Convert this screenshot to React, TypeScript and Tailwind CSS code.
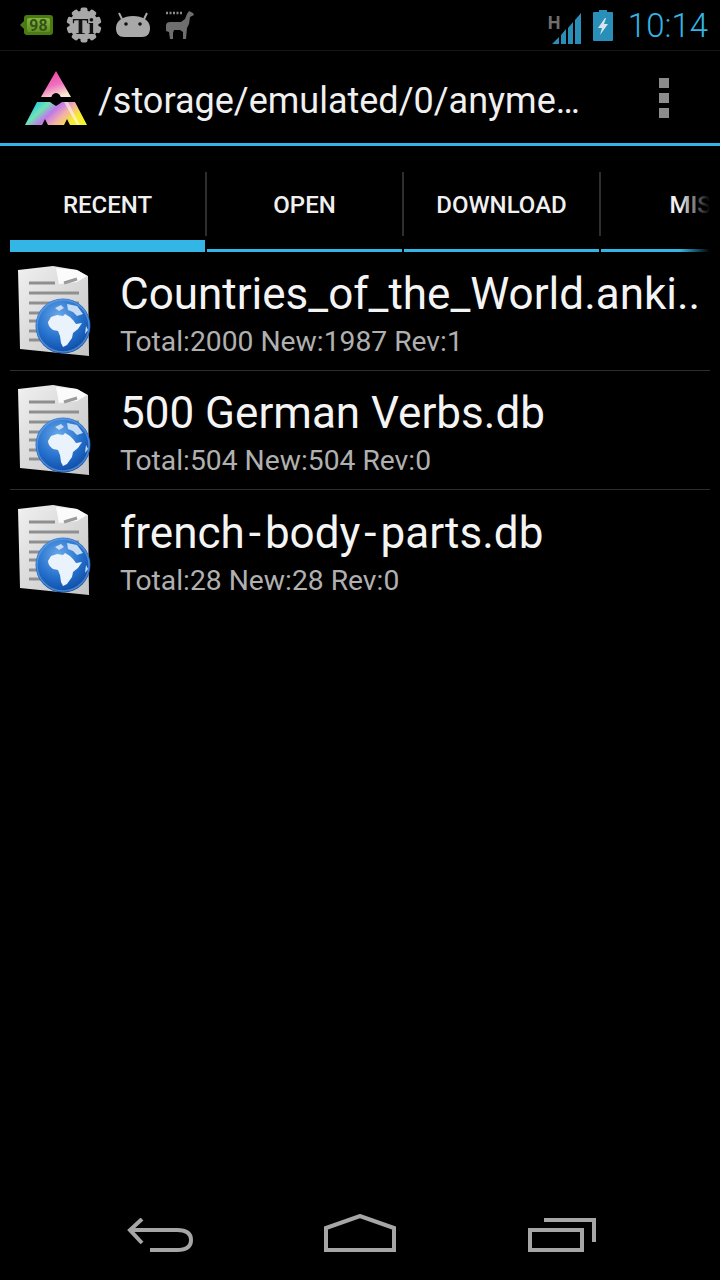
const rows = [
  { name: 'Countries_of_the_World.anki..', stats: 'Total:2000 New:1987 Rev:1' },
  { name: '500 German Verbs.db', stats: 'Total:504 New:504 Rev:0' },
  { name: 'french-body-parts.db', stats: 'Total:28 New:28 Rev:0' },
]

const tabs = ['RECENT', 'OPEN', 'DOWNLOAD', 'MISC']

function BatteryGreen() {
  return (
    <svg width="36" height="26" viewBox="0 0 36 26" className="blur-[0.4px]">
      <defs>
        <linearGradient id="batt" x1="0" y1="0" x2="0" y2="1">
          <stop offset="0" stopColor="#86b53e" />
          <stop offset="1" stopColor="#5f8f22" />
        </linearGradient>
      </defs>
      <path d="M1 13l4-4V6q0-3 3-3h23q3 0 3 3v14q0 3-3 3H8q-3 0-3-3v-3z" fill="#4a7a12" />
      <rect x="8" y="6" width="23" height="14" rx="2" fill="url(#batt)" />
      <text x="19.5" y="19" textAnchor="middle" fontSize="16" fontWeight="700" fill="#33501a" fontFamily="Roboto, sans-serif">98</text>
    </svg>
  )
}

function GearTi() {
  const teeth = Array.from({ length: 10 }, (_, i) => i * 36)
  return (
    <svg width="36" height="36" viewBox="0 0 36 36" className="blur-[0.3px]">
      {teeth.map(a => (
        <rect key={a} x="14.5" y="0.5" width="7" height="8" rx="2" fill="#a8a8a8" transform={`rotate(${a} 18 18)`} />
      ))}
      <circle cx="18" cy="18" r="14.5" fill="#a8a8a8" />
      <text x="17.5" y="27" textAnchor="middle" fontSize="24" fontWeight="700" fill="#111" fontFamily="Liberation Serif, serif">Ti</text>
    </svg>
  )
}

function AndroidHead() {
  return (
    <svg width="36" height="26" viewBox="0 0 36 26" className="blur-[0.3px]">
      <path d="M7 7L4 1M29 7l3-6" stroke="#a8a8a8" strokeWidth="2" />
      <path d="M1 16C1 8 9 4 18 4s17 4 17 12c0 6-3 9-8 9H9c-5 0-8-3-8-9z" fill="#a8a8a8" />
      <circle cx="11" cy="12" r="1.8" fill="#111" />
      <circle cx="25" cy="12" r="1.8" fill="#111" />
    </svg>
  )
}

function Llama() {
  return (
    <svg width="30" height="30" viewBox="0 0 30 30" className="blur-[0.3px]">
      <path d="M1 3h2M4.500 3h2M8 3h2M11.500 3h2M15 3h2" stroke="#8a8a8a" strokeWidth="2.500" />
      <path d="M24 1l4 2 1 2-4 2-1 7-2 4-1 11h-3v-7l-3-2-6 0-1 3 0 6H5l-1-7-3-1V15c0-2 2-3 4-3h11l4-3 2-5z" fill="#6e6e6e" />
    </svg>
  )
}

function Signal() {
  return (
    <svg width="30" height="32" viewBox="0 0 30 32">
      <path d="M0 31L7 24V31zM9 22L14 16V31H9zM16 15L21 9V31H16zM23 7L29 0V31H23z" fill="#2a8fb8" />
    </svg>
  )
}

function BatteryCharging() {
  return (
    <svg width="20" height="31" viewBox="0 0 20 31">
      <path d="M6 0h8v2h5a1 1 0 0 1 1 1v27a1 1 0 0 1-1 1H1a1 1 0 0 1-1-1V3a1 1 0 0 1 1-1h5z" fill="#2a8fb8" />
      <path d="M12 8L5 18h4l-2 7 8-11h-4l2-6z" fill="#d6e6ec" />
    </svg>
  )
}

function Logo() {
  return (
    <svg width="63" height="56" viewBox="0 0 63 56" className="blur-[0.5px]">
      <defs>
        <linearGradient id="logoTop" x1="0.2" y1="0" x2="0.6" y2="1">
          <stop offset="0" stopColor="#f0409c" />
          <stop offset="0.55" stopColor="#f070c0" />
          <stop offset="1" stopColor="#f8ecd0" />
        </linearGradient>
        <linearGradient id="logoBottom" x1="0" y1="0.3" x2="1" y2="0.7">
          <stop offset="0" stopColor="#12c4f4" />
          <stop offset="0.24" stopColor="#70e4b4" />
          <stop offset="0.42" stopColor="#c078ea" />
          <stop offset="0.62" stopColor="#f4b0a8" />
          <stop offset="0.84" stopColor="#f7ec30" />
          <stop offset="1" stopColor="#f2f230" />
        </linearGradient>
      </defs>
      <path d="M31 0L46 26H16z" fill="url(#logoTop)" />
      <path d="M12 31H25L31 35L37 31H50L62 54H0z" fill="url(#logoBottom)" />
      <path d="M39 31L52 54H55L43 31z" fill="#fff" opacity="0.55" />
      <path d="M17 54l3-6 3 6zM39 54l3-6 3 6z" fill="#000" />
      <ellipse cx="31" cy="28" rx="5" ry="6" fill="#000" />
    </svg>
  )
}

function Overflow() {
  return (
    <div className="flex flex-col gap-[5px]">
      <div className="w-[10px] h-[10px] bg-[#8c8c8c]" />
      <div className="w-[10px] h-[10px] bg-[#8c8c8c]" />
      <div className="w-[10px] h-[10px] bg-[#8c8c8c]" />
    </div>
  )
}

function DocGlobe({ id }: { id: number }) {
  return (
    <svg width="76" height="94" viewBox="0 0 76 94" className="shrink-0 blur-[0.6px]">
      <defs>
        <radialGradient id={`globe${id}`} cx="0.42" cy="0.32" r="0.75">
          <stop offset="0" stopColor="#6aa8ea" />
          <stop offset="0.55" stopColor="#2470cc" />
          <stop offset="1" stopColor="#0a439c" />
        </radialGradient>
        <linearGradient id={`paper${id}`} x1="0" y1="0" x2="1" y2="1">
          <stop offset="0" stopColor="#f0f0f0" />
          <stop offset="1" stopColor="#c4c4c4" />
        </linearGradient>
      </defs>
      <path d="M1 6L36 2L60 6L71 12L72 92L3 85z" fill={`url(#paper${id})`} />
      <path d="M39 4L42 20L60 18L70 12L60 6z" fill="#fbfbfb" />
      <path d="M47 19L60 15" stroke="#9a9a9a" strokeWidth="3" />
      <path d="M12 19H38M12 29H62M12 39H62M12 49H42M12 57H32M12 67H27M12 76H27" stroke="#8f8f8f" strokeWidth="3" />
      <circle cx="46" cy="62" r="27.500" fill={`url(#globe${id})`} />
      <circle cx="46" cy="62" r="26" fill="none" stroke="#6ea6e6" strokeWidth="1.500" opacity="0.6" />
      <path d="M31 58L34 53L40 51L46 52L48 50L53 53L56 56L59 60L65 59L61 65L56 69L55 74L50 81L46 83L44 79L43 72L41 67L36 66C33 64 31 61 31 58z" fill="#eaf3fc" />
      <path d="M38 44L44 41L47 44L42 47zM50 40L60 42L66 50L60 52L56 48L51 46zM69 62L71 66L68 70z" fill="#c6dcf4" />
    </svg>
  )
}

function Back() {
  return (
    <svg width="66" height="34" viewBox="0 0 66 34">
      <path d="M3 12H50Q64 12 64 22Q64 32 50 32H23M15 1L3 12L15 25" fill="none" stroke="#a6a6a6" strokeWidth="4" />
    </svg>
  )
}

function Home() {
  return (
    <svg width="72" height="38" viewBox="0 0 72 38">
      <path d="M2 36V14L36 2L70 14V36z" fill="none" stroke="#a6a6a6" strokeWidth="4" />
    </svg>
  )
}

function Recents() {
  return (
    <svg width="68" height="34" viewBox="0 0 68 34">
      <path d="M2 12H54V32H2z" fill="none" stroke="#a6a6a6" strokeWidth="4" />
      <path d="M16 2H66V24" fill="none" stroke="#a6a6a6" strokeWidth="4" />
    </svg>
  )
}

// old Roboto has a much wider hyphen than the installed one
function Name({ text }: { text: string }) {
  const parts = text.split('-')
  return (
    <span className="text-[44px] leading-[52px] text-[#f4f4f4] whitespace-nowrap">
      {parts.map((p, i) => (
        <span key={i}>
          {i > 0 && <span className="mx-[4px]">-</span>}
          {p}
        </span>
      ))}
    </span>
  )
}

export default function App() {
  return (
    <div className="w-[720px] h-[1280px] bg-black flex flex-col overflow-hidden font-['Roboto',sans-serif]">
      <div className="h-[51px] shrink-0 flex items-center pl-[19px] pr-[12px] border-b border-[#161616]">
        <BatteryGreen />
        <div className="ml-[11px]"><GearTi /></div>
        <div className="ml-[13px]"><AndroidHead /></div>
        <div className="ml-[14px]"><Llama /></div>
        <div className="ml-auto relative pt-[8px]">
          <span className="absolute left-[-4px] top-[9px] text-[18px] leading-none font-bold text-[#6e6e6e]">H</span>
          <Signal />
        </div>
        <div className="ml-[11px]"><BatteryCharging /></div>
        <span className="ml-[15px] text-[33px] leading-none font-light text-[#33b5e5]">10:14</span>
      </div>

      <div className="h-[92px] shrink-0 flex items-center pl-[25px] pr-[51px]">
        <div className="mt-[3px]"><Logo /></div>
        <span className="ml-[10px] mt-[8px] text-[36px] leading-none text-[#f0f0f0]">/storage/emulated/0/anyme…</span>
        <div className="ml-auto mt-[2px]"><Overflow /></div>
      </div>
      <div className="h-[3px] shrink-0 bg-[#33b5e5]" />

      <div className="mx-[10px] h-[106px] shrink-0 flex relative overflow-hidden">
        {tabs.map((t, i) => (
          <div key={t} className="w-[197px] shrink-0 flex flex-col">
            <div className="h-[94px] flex items-center justify-center relative pt-[24px] pr-[2px]">
              <span className="text-[24px] font-medium text-[#f0f0f0]">{t}</span>
              <div className="absolute right-0 top-[26px] h-[64px] w-[2px] bg-[#2e2e2e]" />
            </div>
            <div className="h-[12px] flex items-end pr-[2px]">
              <div className={i === 0 ? 'w-full h-[12px] bg-[#33b5e5]' : 'w-full h-[3px] bg-[#33b5e5]'} />
            </div>
          </div>
        ))}
        <div className="absolute right-0 top-0 bottom-0 w-[30px] bg-gradient-to-r from-transparent to-black" />
      </div>

      <div className="mx-[10px] flex flex-col">
        {rows.map((r, i) => (
          <div key={r.name} className={i < 2 ? 'h-[119px] flex items-center pl-[7px] border-b border-[#2e2e2e]' : 'h-[119px] flex items-center pl-[7px]'}>
            <DocGlobe id={i} />
            <div className="ml-[27px] pt-[6px] flex flex-col">
              <Name text={r.name} />
              <span className="mt-[4px] text-[28.25px] leading-[36px] text-[#b0b0b0]">{r.stats}</span>
            </div>
          </div>
        ))}
      </div>

      <div className="mt-auto h-[96px] shrink-0 flex items-start pt-[30px]">
        <div className="ml-[127px] mt-[4px]"><Back /></div>
        <div className="ml-[131px]"><Home /></div>
        <div className="ml-[132px] mt-[4px]"><Recents /></div>
      </div>
    </div>
  )
}
